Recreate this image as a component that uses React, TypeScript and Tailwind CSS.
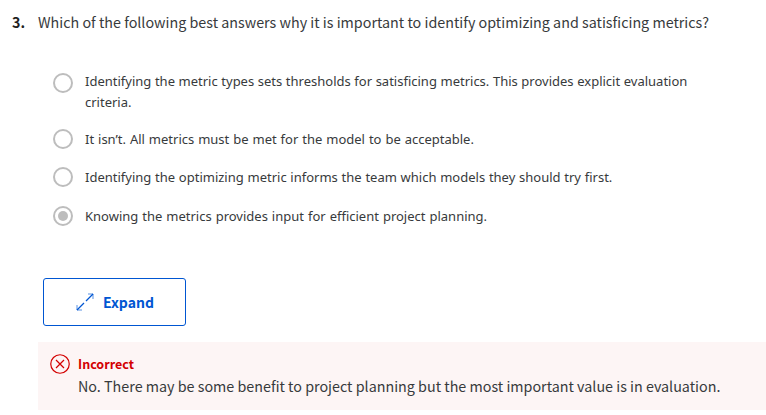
const options = [
  { text: 'Identifying the metric types sets thresholds for satisficing metrics. This provides explicit evaluation criteria.', row: 'h-[56px]', font: '[word-spacing:0.22px]', checked: false },
  { text: 'It isn’t. All metrics must be met for the model to be acceptable.', row: 'h-[38px]', font: 'pt-[2px] [word-spacing:0.56px]', checked: false },
  { text: 'Identifying the optimizing metric informs the team which models they should try first.', row: 'h-[39px]', font: 'pt-[2px] [word-spacing:0.36px]', checked: false },
  { text: 'Knowing the metrics provides input for efficient project planning.', row: 'h-[39px]', font: 'pt-[2px] [word-spacing:0.6px]', checked: true },
];

function Radio({ checked }: { checked: boolean }) {
  return (
    <span className="mt-[2px] flex size-5 shrink-0 items-center justify-center rounded-full border-2 border-[#bdbdbd]">
      {checked && <span className="size-[10px] rounded-full bg-[#bdbdbd]" />}
    </span>
  );
}

export default function App() {
  return (
    <main className="h-[415px] w-[766px] overflow-hidden bg-white pt-[10px] font-['Noto_Sans_CJK_SC',sans-serif] text-[#373a3c]">
      <div className="flex h-[61px] pl-[12px] text-[14.32px] leading-6">
        <span className="w-[26px] shrink-0 font-bold text-[#1f1f1f]">3.</span>
        <h1 className="whitespace-nowrap"><span>Which of the following best answers why it is important to identify optimizing and satisficing metrics?</span></h1>
      </div>
      <div className="h-[207px] pl-[53px]">
        {options.map((o) => (
          <label key={o.text} className={`flex gap-[12px] ${o.row}`}>
            <Radio checked={o.checked} />
            <span className={`w-[620px] font-['Noto_Sans',sans-serif] text-[13px] leading-[21px] ${o.font}`}>{o.text}</span>
          </label>
        ))}
      </div>
      <button className="ml-[43px] flex h-[48px] w-[143px] items-center rounded-[3px] border border-[#0056d2] pl-[32px] text-[14px] font-bold text-[#0056d2]">
        <svg width="18" height="18" viewBox="0 0 18 18" fill="none" stroke="currentColor" className="mr-[9px]">
          <path d="M1 12v5h5M12 1h5v5" strokeOpacity="0.65" />
          <path d="M1 17l7-7M10 8l7-7" strokeWidth="1.3" />
        </svg>
        Expand
      </button>
      <section className="mt-[16px] ml-[38px] flex h-[68px] bg-[#fdf5f5] pt-[12px] pl-[12px]">
        <svg width="20" height="20" viewBox="0 0 20 20" fill="none" stroke="#d30001" className="mr-[8px] shrink-0">
          <circle cx="10" cy="10" r="9.25" strokeWidth="1.2" />
          <path d="M6 6l8 8M14 6l-8 8" strokeWidth="1.2" />
        </svg>
        <div>
          <h2 className="text-[12.5px] leading-[20px] font-bold text-[#d30001]">Incorrect</h2>
          <p className="text-[14.32px] leading-6 whitespace-nowrap"><span>No. There may be some benefit to project planning but the most important value is in evaluation.</span></p>
        </div>
      </section>
    </main>
  );
}
